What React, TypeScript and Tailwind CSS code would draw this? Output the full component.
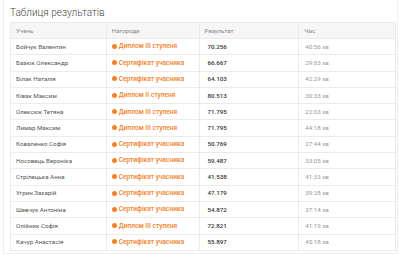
import React from "react";

const rows: [string, string, string, string][] = [
  ["Бойчук Валентин", "Диплом ІІІ ступеня", "70.256", "40:56 хв"],
  ["Базюк Олександр", "Сертифікат учасника", "66.667", "29:03 хв"],
  ["Білак Наталія", "Сертифікат учасника", "64.103", "42:29 хв"],
  ["Ківак Максим", "Диплом ІІ ступеня", "80.513", "30:33 хв"],
  ["Олексюк Тетяна", "Диплом ІІІ ступеня", "71.795", "22:03 хв"],
  ["Лимар Максим", "Диплом ІІІ ступеня", "71.795", "44:18 хв"],
  ["Коваленко Софія", "Сертифікат учасника", "50.769", "27:44 хв"],
  ["Носовець Вероніка", "Сертифікат учасника", "59.487", "33:05 хв"],
  ["Стрілецька Анна", "Сертифікат учасника", "41.538", "41:33 хв"],
  ["Угрин Захарій", "Сертифікат учасника", "47.179", "39:28 хв"],
  ["Шевчук Антоніна", "Сертифікат учасника", "54.872", "37:14 хв"],
  ["Олійник Софія", "Диплом ІІІ ступеня", "72.821", "41:19 хв"],
  ["Качур Анастасія", "Сертифікат учасника", "55.897", "45:18 хв"],
];

export default function App() {
  return (
    <div className="w-[400px] h-[255px] overflow-hidden bg-white" style={{ fontFamily: "Roboto, 'Liberation Sans', sans-serif" }}>
      <div className="ml-[3px] mr-[2px] border-x border-b border-[#efefef] px-[6px] pt-[6px] pb-[2px]">
        <div className="text-[10px] leading-[14px] font-light text-[#444] mb-[2px]">Таблиця результатів</div>
        <table className="w-[386px] border-collapse text-[6.2px] leading-[8px]">
          <colgroup>
            <col className="w-[96px]" />
            <col className="w-[93px]" />
            <col className="w-[100px]" />
            <col className="w-[97px]" />
          </colgroup>
          <thead>
            <tr className="bg-[#f6f6f6] h-[16px]">
              {["Учень", "Нагороди", "Результат", "Час"].map((h) => (
                <th key={h} className="border border-[#ebebeb] text-left font-normal text-[#888] pl-[5px] py-0">
                  {h}
                </th>
              ))}
            </tr>
          </thead>
          <tbody>
            {rows.map((r) => (
              <tr key={r[0]} className="h-[16.3px]">
                <td className="border border-[#ebebeb] pl-[5px] py-0 text-[#555]">{r[0]}</td>
                <td className="border border-[#ebebeb] pl-[5px] py-0 text-[#f5822a] text-[6.6px] font-medium">
                  <span className="inline-flex items-center gap-[2px]">
                    <span className="inline-block w-[5px] h-[5px] rounded-full bg-[#f5822a]" />
                    {r[1]}
                  </span>
                </td>
                <td className="border border-[#ebebeb] pl-[8px] py-0 text-[#333] font-medium">{r[2]}</td>
                <td className="border border-[#ebebeb] pl-[6px] py-0 text-[#999]">{r[3]}</td>
              </tr>
            ))}
          </tbody>
        </table>
      </div>
    </div>
  );
}
